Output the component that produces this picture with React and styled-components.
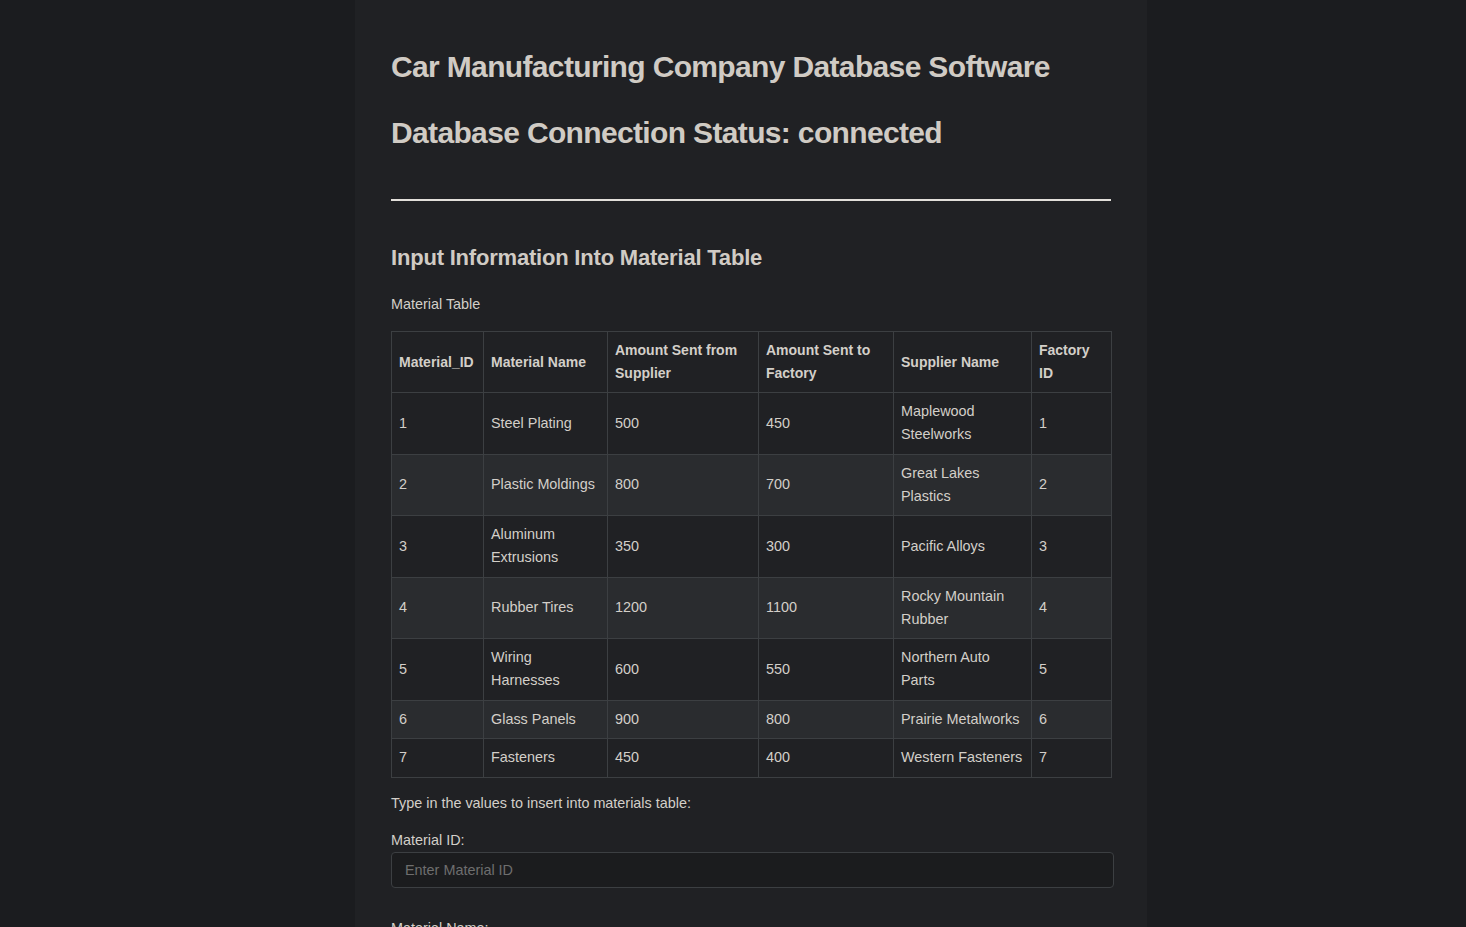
import React from 'react'
import styled, { createGlobalStyle } from 'styled-components'

const GlobalStyle = createGlobalStyle`
  html, body {
    margin: 0;
    padding: 0;
    background: #1b1c1f;
    color: #d3cfc9;
    font-family: "Liberation Sans", Arial, sans-serif;
  }
`

const materials = [
    { id: 1, name: 'Steel Plating', fromSupplier: 500, toFactory: 450, supplier: 'Maplewood Steelworks', factory: 1 },
    { id: 2, name: 'Plastic Moldings', fromSupplier: 800, toFactory: 700, supplier: 'Great Lakes Plastics', factory: 2 },
    { id: 3, name: 'Aluminum Extrusions', fromSupplier: 350, toFactory: 300, supplier: 'Pacific Alloys', factory: 3 },
    { id: 4, name: 'Rubber Tires', fromSupplier: 1200, toFactory: 1100, supplier: 'Rocky Mountain Rubber', factory: 4 },
    { id: 5, name: 'Wiring Harnesses', fromSupplier: 600, toFactory: 550, supplier: 'Northern Auto Parts', factory: 5 },
    { id: 6, name: 'Glass Panels', fromSupplier: 900, toFactory: 800, supplier: 'Prairie Metalworks', factory: 6 },
    { id: 7, name: 'Fasteners', fromSupplier: 450, toFactory: 400, supplier: 'Western Fasteners', factory: 7 },
]

const columns = [
    { label: 'Material_ID', width: 92 },
    { label: 'Material Name', width: 124 },
    { label: 'Amount Sent from Supplier', width: 151 },
    { label: 'Amount Sent to Factory', width: 135 },
    { label: 'Supplier Name', width: 138 },
    { label: 'Factory ID', width: 80 },
]

export default function App() {
    return (
        <>
            <GlobalStyle />
            <Page>
                <Panel>
                    <Title>Car Manufacturing Company Database Software</Title>
                    <Title>Database Connection Status: connected</Title>
                    <Divider />
                    <SectionTitle>Input Information Into Material Table</SectionTitle>
                    <Caption>Material Table</Caption>
                    <Table>
                        <colgroup>
                            {columns.map(col => <col key={col.label} style={{ width: col.width }} />)}
                        </colgroup>
                        <thead>
                            <tr>
                                {columns.map(col => <Th key={col.label}>{col.label}</Th>)}
                            </tr>
                        </thead>
                        <tbody>
                            {materials.map((item, i) =>
                                <Row key={item.id} $striped={i % 2 === 1}>
                                    <Td>{item.id}</Td>
                                    <Td>{item.name}</Td>
                                    <Td>{item.fromSupplier}</Td>
                                    <Td>{item.toFactory}</Td>
                                    <Td>{item.supplier}</Td>
                                    <Td>{item.factory}</Td>
                                </Row>
                            )}
                        </tbody>
                    </Table>
                    <Caption $top={14}>Type in the values to insert into materials table:</Caption>
                    <Field>
                        <Label>Material ID:</Label>
                        <Input placeholder="Enter Material ID" />
                    </Field>
                    <Field>
                        <Label>Material Name:</Label>
                        <Input placeholder="Enter Material Name" />
                    </Field>
                </Panel>
            </Page>
        </>
    )
}

const Page = styled.div`
display: flex;
justify-content: center;
padding-left: 36px;
min-height: 100vh;
`

const Panel = styled.main`
width: 720px;
padding: 30px 36px 40px;
background: #202124;
`

const Title = styled.h1`
margin: 18px 0 0;
font-size: 30px;
line-height: 38px;
font-weight: 700;
letter-spacing: -0.65px;
color: #d0cbc4;
& + & {
    margin-top: 28px;
}
`

const Divider = styled.hr`
margin: 47px 0 0;
border: 0;
height: 2px;
background: #e2dfda;
`

const SectionTitle = styled.h2`
margin: 42px 0 0;
font-size: 22px;
line-height: 30px;
font-weight: 700;
letter-spacing: -0.2px;
color: #d0cbc4;
`

const Caption = styled.p`
margin: ${p => p.$top || 20}px 0 0;
font-size: 14.4px;
line-height: 22px;
`

const Table = styled.table`
margin-top: 16px;
width: 720px;
border-collapse: collapse;
table-layout: fixed;
font-size: 14.4px;
line-height: 23px;
`

const Th = styled.th`
text-align: left;
font-weight: 700;
font-size: 14px;
padding: 7px 5px 7px 7px;
border: 1px solid #3c3f42;
vertical-align: middle;
`

const Row = styled.tr`
background: ${p => p.$striped ? '#2a2c2f' : '#202124'};
`

const Td = styled.td`
padding: 7.25px 5px 7.25px 7px;
border: 1px solid #3c3f42;
vertical-align: middle;
`

const Field = styled.div`
display: flex;
flex-direction: column;
margin-top: 16px;
& + & {
    margin-top: 30px;
}
`

const Label = styled.label`
font-size: 14.4px;
line-height: 20px;
margin-bottom: 2px;
`

const Input = styled.input`
width: 723px;
box-sizing: border-box;
height: 36px;
padding: 6px 13px;
font-family: inherit;
font-size: 14.4px;
color: #d3cfc9;
background: #1b1c1e;
border: 1px solid #3c3f42;
border-radius: 4px;
outline: none;
&::placeholder {
    color: #6e6e6e;
}
`
